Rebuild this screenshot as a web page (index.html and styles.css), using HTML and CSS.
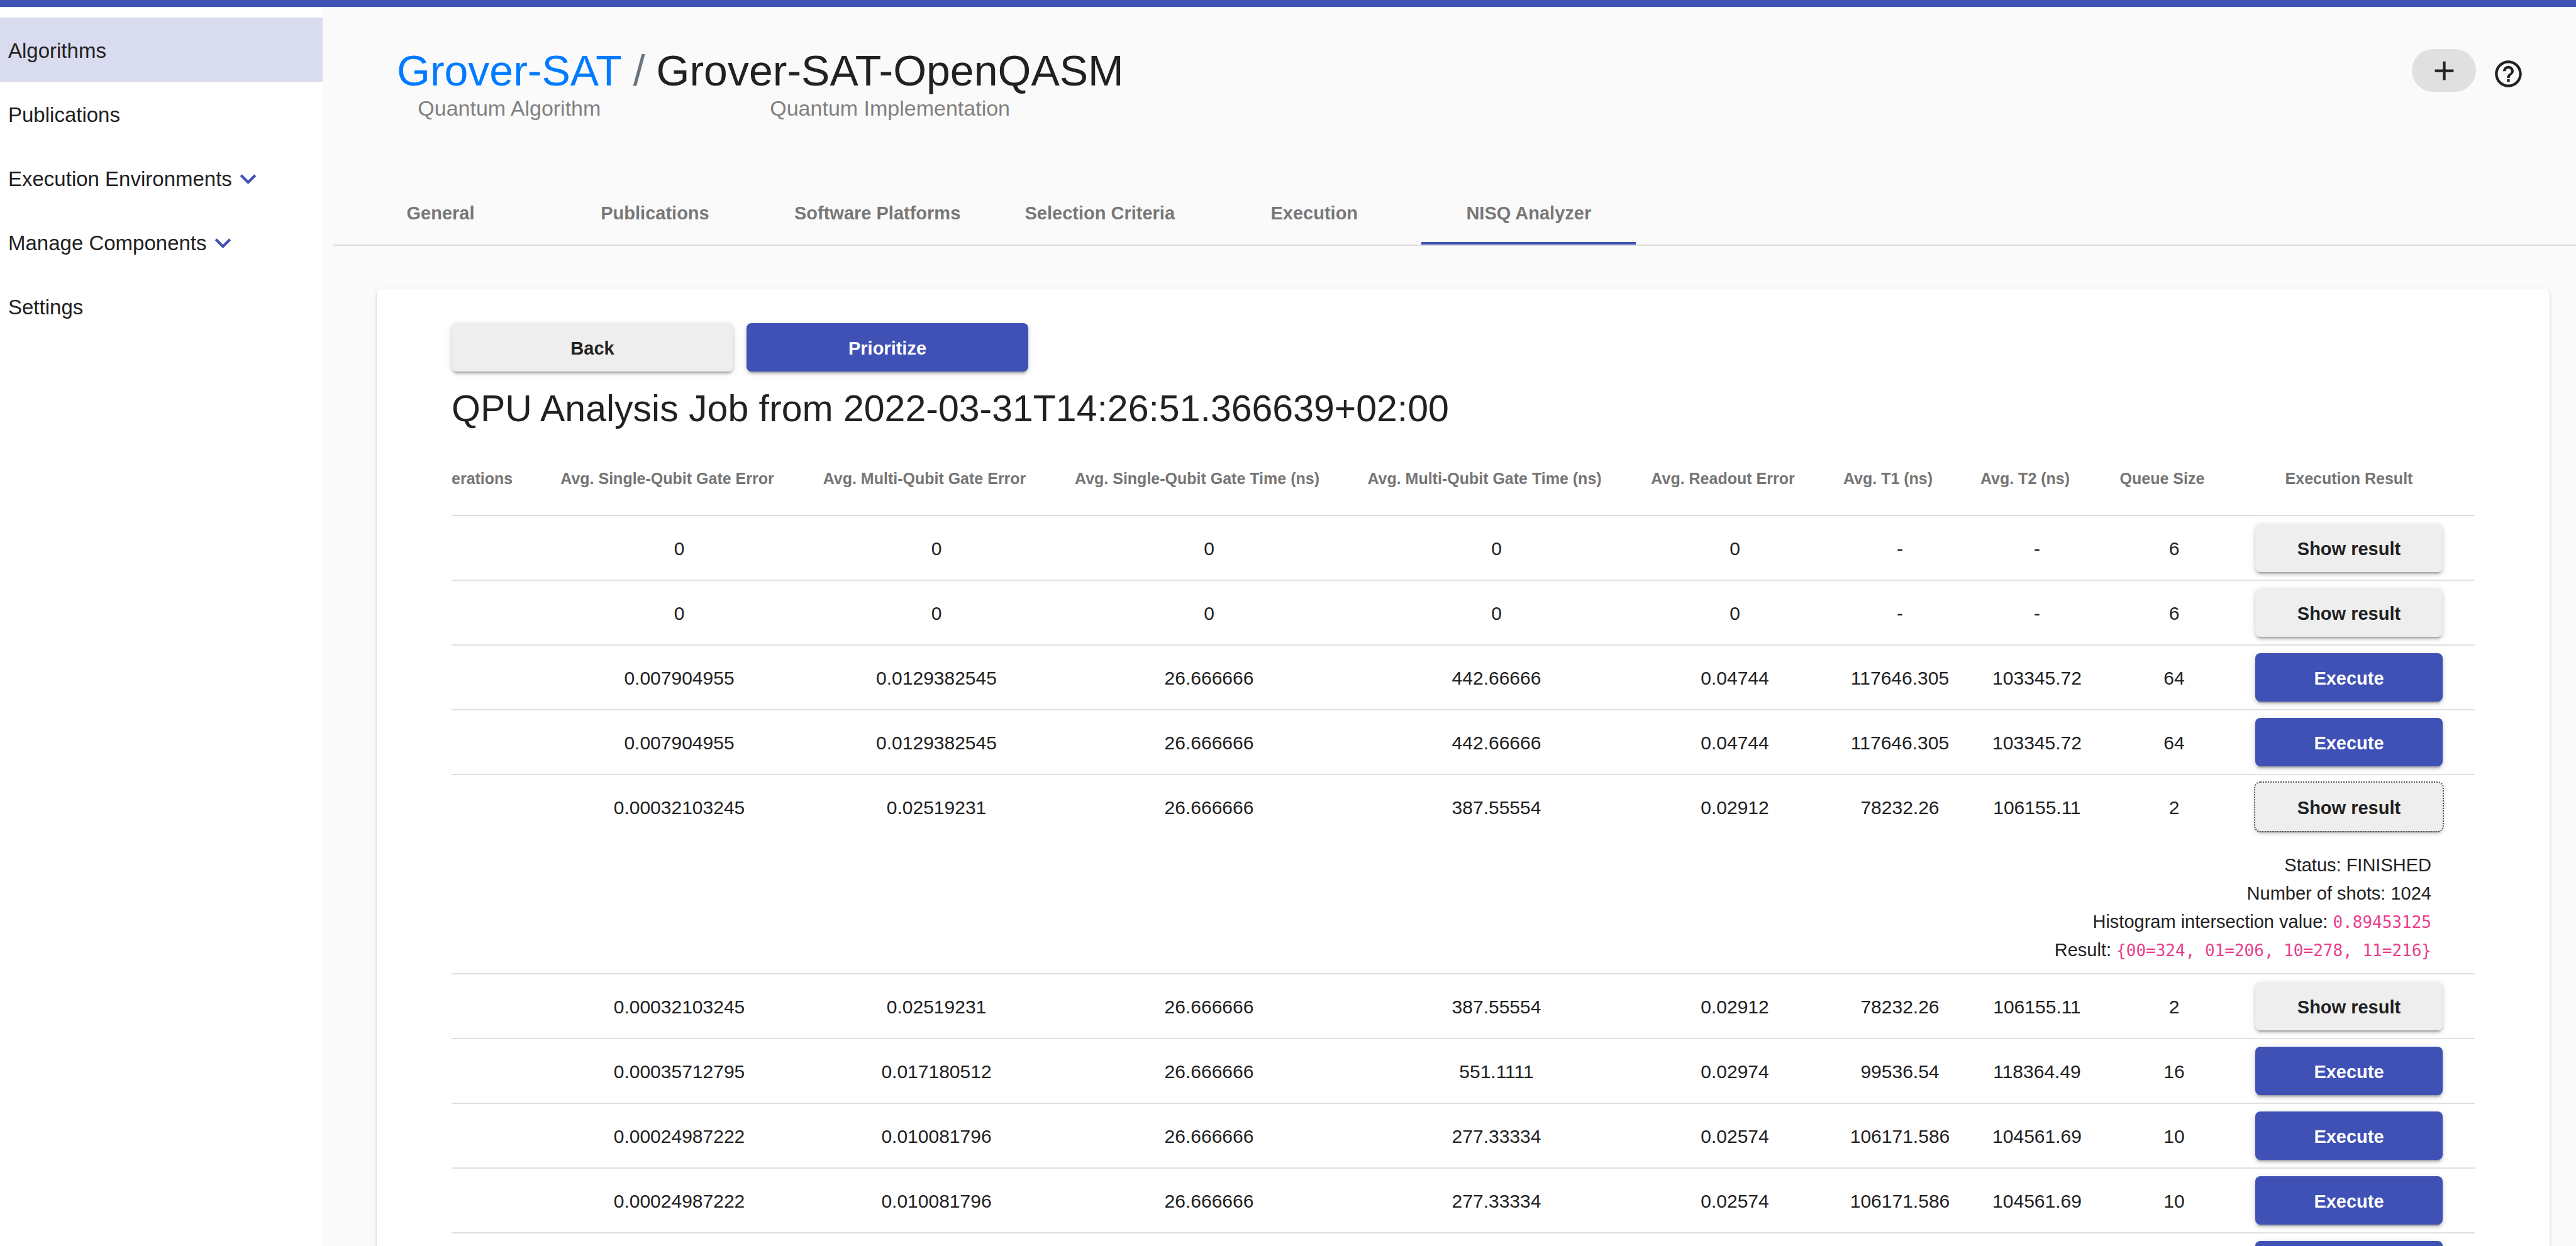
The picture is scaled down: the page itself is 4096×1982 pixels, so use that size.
FILE: index.html
```html
<!DOCTYPE html>
<html lang="en">
<head>
<meta charset="utf-8">
<title>NISQ Analyzer</title>
<link rel="stylesheet" href="styles.css">
</head>
<body>
<div class="topbar"></div>
<div class="layout">
  <nav class="sidebar">
    <a class="nav-item active" href="#">Algorithms</a>
    <a class="nav-item" href="#">Publications</a>
    <a class="nav-item" href="#">Execution Environments<svg class="icon chevron" viewBox="0 0 24 24"><path d="M16.59 8.59L12 13.17 7.41 8.59 6 10l6 6 6-6z"/></svg></a>
    <a class="nav-item" href="#">Manage Components<svg class="icon chevron" viewBox="0 0 24 24"><path d="M16.59 8.59L12 13.17 7.41 8.59 6 10l6 6 6-6z"/></svg></a>
    <a class="nav-item" href="#">Settings</a>
  </nav>
  <main class="main">
    <header class="header">
      <div class="breadcrumb">
        <div class="crumb"><a class="crumb-title link" href="#">Grover-SAT</a><span class="crumb-sub">Quantum Algorithm</span></div>
        <span class="crumb-title slash">/</span>
        <div class="crumb"><span class="crumb-title">Grover-SAT-OpenQASM</span><span class="crumb-sub">Quantum Implementation</span></div>
      </div>
      <div class="actions">
        <button class="add" aria-label="Add"><svg class="icon" viewBox="0 0 24 24"><path d="M19 13h-6v6h-2v-6H5v-2h6V5h2v6h6v2z"/></svg></button>
        <button class="help" aria-label="Help"><svg class="icon" viewBox="0 0 24 24"><path d="M11 18h2v-2h-2v2zm1-16C6.48 2 2 6.48 2 12s4.48 10 10 10 10-4.48 10-10S17.52 2 12 2zm0 18c-4.41 0-8-3.59-8-8s3.59-8 8-8 8 3.59 8 8-3.59 8-8 8zm0-14c-2.21 0-4 1.79-4 4h2c0-1.1.9-2 2-2s2 .9 2 2c0 2-3 1.75-3 5h2c0-2.25 3-2.5 3-5 0-2.21-1.79-4-4-4z"/></svg></button>
      </div>
    </header>
    <nav class="tabs">
      <a class="tab" href="#">General</a>
      <a class="tab" href="#">Publications</a>
      <a class="tab" href="#">Software Platforms</a>
      <a class="tab" href="#">Selection Criteria</a>
      <a class="tab" href="#">Execution</a>
      <a class="tab active" href="#">NISQ Analyzer</a>
    </nav>
    <section class="card">
      <div class="card-actions">
        <button class="btn">Back</button>
        <button class="btn primary">Prioritize</button>
      </div>
      <h1 class="title">QPU Analysis Job from 2022-03-31T14:26:51.366639+02:00</h1>
      <table class="jobs">
        <colgroup>
          <col class="c-ops"><col class="c-sqe"><col class="c-mqe"><col class="c-sqt"><col class="c-mqt"><col class="c-ro"><col class="c-time"><col class="c-time2"><col class="c-time"><col class="c-exec">
        </colgroup>
        <thead>
          <tr><th class="first">erations</th><th>Avg. Single-Qubit Gate Error</th><th>Avg. Multi-Qubit Gate Error</th><th>Avg. Single-Qubit Gate Time (ns)</th><th>Avg. Multi-Qubit Gate Time (ns)</th><th>Avg. Readout Error</th><th>Avg. T1 (ns)</th><th>Avg. T2 (ns)</th><th>Queue Size</th><th class="exec">Execution Result</th></tr>
        </thead>
        <tbody>
          <tr><td></td><td>0</td><td>0</td><td>0</td><td>0</td><td>0</td><td>-</td><td>-</td><td>6</td><td class="exec"><button class="btn">Show result</button></td></tr>
          <tr><td></td><td>0</td><td>0</td><td>0</td><td>0</td><td>0</td><td>-</td><td>-</td><td>6</td><td class="exec"><button class="btn">Show result</button></td></tr>
          <tr><td></td><td>0.007904955</td><td>0.0129382545</td><td>26.666666</td><td>442.66666</td><td>0.04744</td><td>117646.305</td><td>103345.72</td><td>64</td><td class="exec"><button class="btn primary">Execute</button></td></tr>
          <tr><td></td><td>0.007904955</td><td>0.0129382545</td><td>26.666666</td><td>442.66666</td><td>0.04744</td><td>117646.305</td><td>103345.72</td><td>64</td><td class="exec"><button class="btn primary">Execute</button></td></tr>
          <tr class="expanded"><td></td><td>0.00032103245</td><td>0.02519231</td><td>26.666666</td><td>387.55554</td><td>0.02912</td><td>78232.26</td><td>106155.11</td><td>2</td><td class="exec"><button class="btn focused">Show result</button></td></tr>
          <tr><td class="detail" colspan="10">
            <div>Status: FINISHED</div>
            <div>Number of shots: 1024</div>
            <div>Histogram intersection value: <code>0.89453125</code></div>
            <div>Result: <code>{00=324, 01=206, 10=278, 11=216}</code></div>
          </td></tr>
          <tr><td></td><td>0.00032103245</td><td>0.02519231</td><td>26.666666</td><td>387.55554</td><td>0.02912</td><td>78232.26</td><td>106155.11</td><td>2</td><td class="exec"><button class="btn">Show result</button></td></tr>
          <tr><td></td><td>0.00035712795</td><td>0.017180512</td><td>26.666666</td><td>551.1111</td><td>0.02974</td><td>99536.54</td><td>118364.49</td><td>16</td><td class="exec"><button class="btn primary">Execute</button></td></tr>
          <tr><td></td><td>0.00024987222</td><td>0.010081796</td><td>26.666666</td><td>277.33334</td><td>0.02574</td><td>106171.586</td><td>104561.69</td><td>10</td><td class="exec"><button class="btn primary">Execute</button></td></tr>
          <tr><td></td><td>0.00024987222</td><td>0.010081796</td><td>26.666666</td><td>277.33334</td><td>0.02574</td><td>106171.586</td><td>104561.69</td><td>10</td><td class="exec"><button class="btn primary">Execute</button></td></tr>
          <tr><td></td><td></td><td></td><td></td><td></td><td></td><td></td><td></td><td></td><td class="exec"><button class="btn primary" aria-label="Execute"></button></td></tr>
        </tbody>
      </table>
    </section>
  </main>
</div>
</body>
</html>
```
FILE: styles.css
```css
* { box-sizing: border-box; }

body {
  margin: 0;
  height: 100vh;
  overflow: hidden;
  display: flex;
  flex-direction: column;
  background: #fafafa;
  color: #212121;
  font-family: "Liberation Sans", Arial, sans-serif;
  font-size: 30px;
}

a { color: inherit; text-decoration: none; }

button {
  border: 0;
  padding: 0;
  font: inherit;
  color: inherit;
  background: none;
}

.icon {
  width: 51px;
  height: 51px;
  fill: currentColor;
  flex: none;
}

.topbar { height: 11px; flex: none; background: #3f51b5; }

.layout { display: flex; flex: 1; min-height: 0; overflow: hidden; }

/* Side navigation */
.sidebar {
  width: 513px;
  flex: none;
  padding-top: 17px;
  background: #fff;
}

.nav-item {
  display: flex;
  align-items: center;
  height: 102px;
  padding: 3px 0 0 13px;
  font-size: 33px;
}

.nav-item.active { background: #d9dbef; }

.chevron { color: #3f51b5; }

/* Page header */
.main { flex: 1; min-width: 0; }

.header {
  display: flex;
  justify-content: space-between;
  align-items: flex-start;
  padding: 61px 82px 95px 118px;
}

.breadcrumb { display: flex; gap: 18px; }

.crumb {
  display: flex;
  flex-direction: column;
  align-items: center;
}

.crumb-title { font-size: 68px; line-height: 80px; }

.crumb-sub { font-size: 34px; line-height: 40px; color: #808080; }

.link { color: #007bff; }

.slash { color: #6c757d; }

.actions {
  display: flex;
  align-items: flex-start;
  gap: 26px;
  padding-top: 6px;
}

.add,
.help {
  display: flex;
  align-items: center;
  justify-content: center;
}

.add {
  width: 102px;
  height: 68px;
  border-radius: 34px;
  background: #e0e0e0;
}

.help { height: 78px; }

/* Tabs */
.tabs {
  display: flex;
  margin-left: 17px;
  border-bottom: 2px solid #dcdcdc;
}

.tab {
  display: flex;
  align-items: center;
  justify-content: center;
  min-width: 341px;
  height: 102px;
  padding: 3px 51px 0;
  border: solid transparent;
  border-width: 4px 0;
  font-size: 29px;
  font-weight: bold;
  color: #777;
}

.tab.active { border-bottom-color: #3f51b5; }

/* Card */
.card {
  margin: 68px 42px 0 86px;
  padding: 55px 119px;
  border-radius: 8px;
  background: #fff;
  box-shadow: 0 4px 2px -2px rgba(0, 0, 0, .2), 0 2px 2px rgba(0, 0, 0, .14), 0 2px 6px rgba(0, 0, 0, .12);
}

.card-actions { display: flex; gap: 21px; }

.card-actions .btn { width: 448px; }

.btn {
  display: block;
  width: 100%;
  height: 77px;
  padding-top: 3px;
  border-radius: 8px;
  background: #eee;
  font-size: 29px;
  font-weight: bold;
  box-shadow: 0 6px 2px -4px rgba(0, 0, 0, .2), 0 4px 4px rgba(0, 0, 0, .14), 0 2px 11px rgba(0, 0, 0, .12);
}

.btn.primary { background: #3f51b5; color: #fff; }

.btn.focused { outline: 2px dotted #555; }

.title {
  margin: 24px 0 15px;
  font-size: 59px;
  line-height: 71px;
  font-weight: normal;
}

/* Results table */
.jobs {
  width: 100%;
  table-layout: fixed;
  border-collapse: separate;
  border-spacing: 0;
}

.c-ops { width: 154px; }
.c-sqe { width: 416px; }
.c-mqe { width: 402px; }
.c-sqt { width: 465px; }
.c-mqt { width: 449px; }
.c-ro { width: 309px; }
.c-time { width: 216px; }
.c-time2 { width: 220px; }
.c-exec { width: 370px; }

th,
td {
  height: 103px;
  padding: 2px 0 0;
  border-bottom: 2px solid #e0e0e0;
  text-align: center;
  white-space: nowrap;
}

th {
  height: 120px;
  padding-right: 38px;
  font-size: 25px;
  color: #757575;
}

th.first { text-align: left; }

th.exec { padding: 2px 51px 0 21px; }

td.exec { padding: 0 51px 0 21px; }

.expanded td { border-bottom-color: transparent; }

td.detail {
  height: 214px;
  padding: 18px 69px 14px 0;
  text-align: right;
  font-size: 29px;
  line-height: 45px;
}

.detail div { height: 45px; }

code {
  font-family: "DejaVu Sans Mono", monospace;
  font-size: 26px;
  color: #e83e8c;
}
```
